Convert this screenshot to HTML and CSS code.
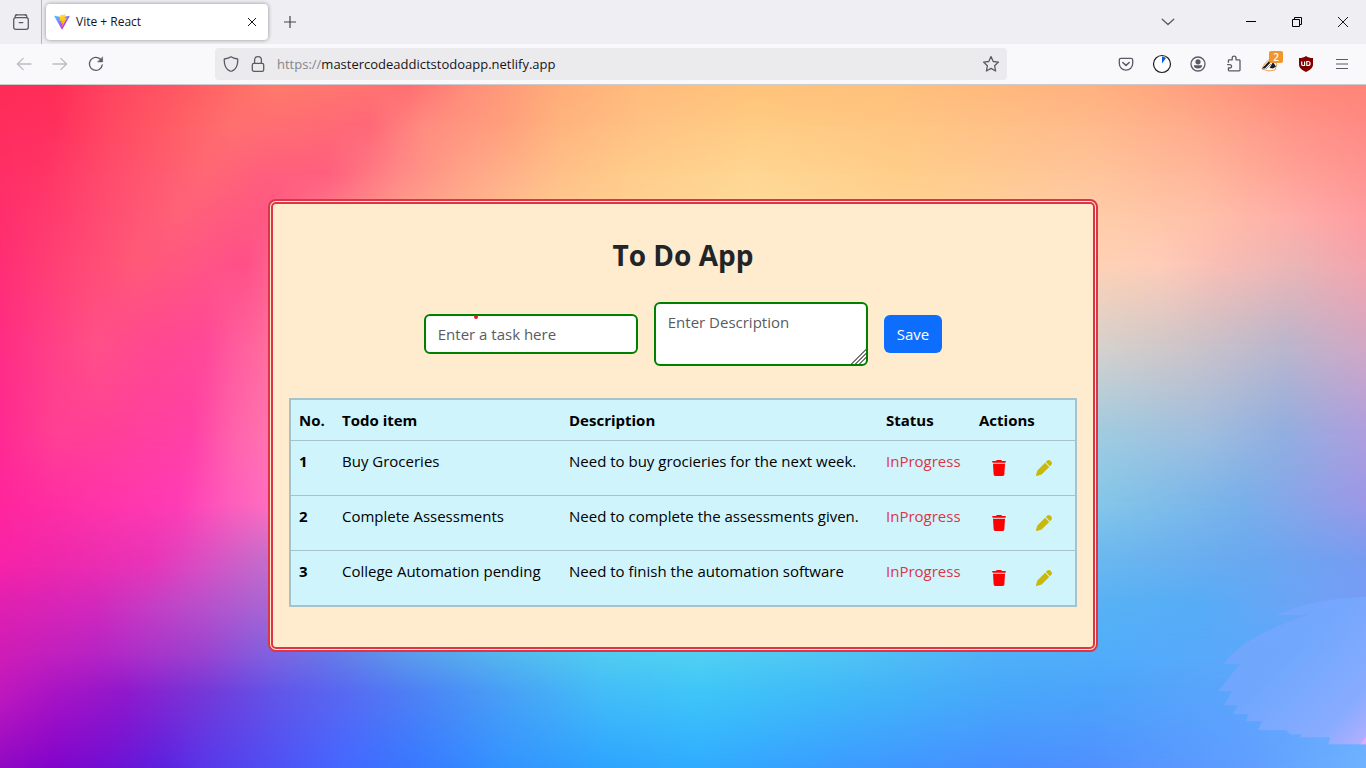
FILE: index.html
```html
<!DOCTYPE html>
<html lang="en">
<head>
<meta charset="utf-8">
<meta name="viewport" content="width=device-width, initial-scale=1">
<title>Vite + React</title>
<link rel="stylesheet" href="styles.css">
</head>
<body>
<svg class="sprite" aria-hidden="true">
  <symbol id="trash" viewBox="0 0 448 512"><path d="M135.200 17.700L128 32H32C14.300 32 0 40 0 56S14.300 84 32 84H416c17.700 0 32-12 32-28s-14.300-24-32-24H320l-7.200-14.300C307.400 6.800 296.300 0 284.200 0H163.800c-12.100 0-23.200 6.800-28.600 17.700zM416 120H32L53.200 467c1.600 25.300 22.600 45 47.900 45H346.900c25.300 0 46.300-19.700 47.900-45L416 120z"/></symbol>
  <symbol id="pen" viewBox="0 0 512 512"><path d="M362.700 19.300L314.300 67.700 444.300 197.700l48.400-48.400c25-25 25-65.500 0-90.500L453.300 19.300c-25-25-65.500-25-90.500 0zm-71 71L58.600 323.500c-10.400 10.400-18 23.300-22.200 37.400L1 481.200C-1.500 489.700 .8 498.800 7 505s15.300 8.500 23.700 6.100l120.300-35.400c14.100-4.200 27-11.800 37.400-22.200L421.700 220.300 291.700 90.300z"/></symbol>
</svg>

<header class="browser">
  <div class="tabstrip">
    <button class="recent" aria-label="Recent browsing">
      <svg width="16" height="16" viewBox="0 0 16 16" class="line"><path d="M3 .8h10"/><rect x=".7" y="3.700" width="14.600" height="11.600" rx="2"/><path d="M2.200 3.700V2.800Q2.200 .8 4 .8M13.800 3.700V2.800Q13.800 .8 12 .8M6.200 8.600h3.600"/></svg>
    </button>
    <div class="tab">
      <svg width="16" height="16" viewBox="0 0 410 404" aria-hidden="true">
        <defs>
          <linearGradient id="va" x1="6" y1="33" x2="235" y2="344" gradientUnits="userSpaceOnUse"><stop stop-color="#41d1ff"/><stop offset="1" stop-color="#bd34fe"/></linearGradient>
          <linearGradient id="vb" x1="195" y1="9" x2="237" y2="293" gradientUnits="userSpaceOnUse"><stop stop-color="#ffea83"/><stop offset=".08" stop-color="#ffdd35"/><stop offset="1" stop-color="#ffa800"/></linearGradient>
        </defs>
        <path fill="url(#va)" d="M399.600 59.500L215.600 388.500c-3.800 6.800-13.600 6.900-17.500 .1L10.600 59.600c-4.200-7.400 2.100-16.300 10.500-14.800l184.100 32.900c1.200 .2 2.400 .2 3.500 0l180.300-32.900c8.300-1.500 14.700 7.400 10.600 14.700z"/>
        <path fill="url(#vb)" d="M293 1.600L156.900 28.200c-2.200 .4-3.900 2.300-4 4.600l-8.400 141.400c-.2 3.300 2.900 5.900 6.100 5.200l37.900-8.700c3.500-.8 6.700 2.300 6 5.900l-11.300 55.100c-.8 3.700 2.700 6.900 6.300 5.800l23.400-7.100c3.600-1.100 7.100 2.100 6.300 5.800l-17.900 86.600c-1.100 5.400 6.100 8.400 9.100 3.700l2-3.100 110.900-221.300c1.900-3.700-1.300-7.900-5.400-7.100l-39 7.500c-3.700 .7-6.800-2.700-5.800-6.300L298.600 7.900c1-3.600-2.100-7-5.600-6.300z"/>
      </svg>
      <span class="tab-title">Vite + React</span>
      <button class="tab-close" aria-label="Close tab"><svg width="10" height="10" viewBox="0 0 10 10"><path d="M1 1l8 8M9 1L1 9" stroke="#15141a"/></svg></button>
    </div>
    <button class="new-tab" aria-label="New tab"><svg width="14" height="14" viewBox="0 0 14 14"><path d="M1 7h12M7 1v12" stroke="#45444d" stroke-width="1.200"/></svg></button>
    <button class="all-tabs" aria-label="List all tabs"><svg width="14" height="8" viewBox="0 0 14 8" class="line"><path d="M1.200 1.200L7 6.600l5.800-5.400"/></svg></button>
    <button class="win" aria-label="Minimize"><svg width="10" height="10" viewBox="0 0 10 10"><path d="M0 4.500h10" stroke="#000"/></svg></button>
    <button class="win" aria-label="Restore"><svg width="10" height="10" viewBox="0 0 10 10" fill="none" stroke="#000"><path d="M.5 2.500h7v7h-7zM2.500 2.500v-2h7v7h-2"/></svg></button>
    <button class="win" aria-label="Close"><svg width="10" height="10" viewBox="0 0 10 10"><path d="M0 0l10 10M10 0L0 10" stroke="#000" stroke-width=".9"/></svg></button>
  </div>

  <div class="toolbar">
    <button class="tool" aria-label="Back" disabled><svg width="16" height="14" viewBox="0 0 16 14" class="line faded"><path d="M7.200 1.400L1.400 7l5.800 5.600M1.600 7H15"/></svg></button>
    <button class="tool" aria-label="Forward" disabled><svg width="16" height="14" viewBox="0 0 16 14" class="line faded"><path d="M8.800 1.400L14.600 7l-5.800 5.600M14.400 7H1"/></svg></button>
    <button class="tool" aria-label="Reload"><svg width="16" height="16" viewBox="0 0 16 16" class="line"><path d="M14.300 8.800A6.500 6.500 0 1 1 12.500 3.300"/><path d="M14.600 1.200v4.700H9.900z" fill="#5b5b66" stroke-width=".6"/></svg></button>

    <div class="urlbar">
      <svg width="16" height="16" viewBox="0 0 16 16" class="line"><path d="M8 .8C6.300 2.200 3.800 2.800 1.300 3c-.3 5 1.400 9.800 5.400 11.900q1.300 .6 2.600 0C13.300 12.800 15 8 14.700 3 12.200 2.800 9.700 2.200 8 .8z"/></svg>
      <svg width="14" height="16" viewBox="0 0 14 16" class="line"><rect x="1.300" y="7.300" width="11.400" height="8" rx="1.600"/><path d="M3.600 7.300V4.100a3.400 3.400 0 0 1 6.800 0v3.200"/></svg>
      <div class="url" role="textbox" aria-label="Address" contenteditable="true" spellcheck="false"><span class="scheme">https://</span>mastercodeaddictstodoapp.netlify.app</div>
      <button class="star" aria-label="Bookmark this page"><svg width="18" height="18" viewBox="0 0 18 18" class="line"><path d="M9 1.600l2.200 4.900 5.300 .6-3.900 3.600 1 5.300L9 13.400 4.400 16l1-5.300L1.500 7.100l5.300-.6z"/></svg></button>
    </div>

    <button class="tool" aria-label="Save to Pocket"><svg width="16" height="16" viewBox="0 0 16 16" class="line"><path d="M3 2.300h10q1.700 0 1.700 1.700v3.500a6.700 6.700 0 0 1-13.400 0V4Q1.300 2.300 3 2.300z"/><path d="M4.800 6.500L8 9.400l3.200-2.900" stroke-width="1.500"/></svg></button>
    <button class="tool" aria-label="Timer"><svg width="20" height="20" viewBox="0 0 20 20"><circle cx="10" cy="10" r="8.500" fill="#fff" stroke="#1c1b22" stroke-width="1.200"/><path d="M10 9.500V2.500a7 7 0 0 1 4 1.500z" fill="#0061e0"/></svg></button>
    <button class="tool" aria-label="Account"><svg width="16" height="16" viewBox="0 0 16 16" class="line"><circle cx="8" cy="8" r="7"/><circle cx="8" cy="5.800" r="2.600" fill="#5b5b66" stroke="none"/><path d="M3.800 9.300h8.400q-.3 3.200-4.200 3.300-3.900-.1-4.200-3.300z" fill="#5b5b66" stroke="none"/></svg></button>
    <button class="tool" aria-label="Extensions"><svg width="16" height="18" viewBox="0 0 16 18" class="line"><path d="M2.400 7.300V5.600q0-.8.800-.8h3V3a1.900 1.900 0 0 1 3.800 0v1.800h3.200q.8 0 .8.800V15q0 .8-.8.800H3.200q-.8 0-.8-.8v-2h1.500a1.700 1.700 0 0 0 0-3.400H1.600"/></svg></button>
    <button class="tool" aria-label="Privacy Badger">
      <svg width="18" height="16" viewBox="0 0 18 16"><path d="M1 13Q4 5 10 3l6 5-2 6-6 1z" fill="#fff" stroke="#f0a050"/><path d="M1 12.500L9 4l.6 2.500L4 12.500zM8.500 12l3.500-6 3 4.500-3 2z" fill="#1c1b22"/><path d="M5 13l5-5" stroke="#999"/></svg>
      <span class="badge">2</span>
    </button>
    <button class="tool" aria-label="uBlock Origin"><svg width="16" height="16" viewBox="0 0 16 16"><path d="M8 0c2 1.400 4 2 7 2v6.500c0 3.500-3 5.500-7 7.500-4-2-7-4-7-7.500V2c3 0 5-.6 7-2z" fill="#800000"/><path d="M3.700 5.500v2.700q0 1.300 1.300 1.300h1.600v-4M8.800 5.500v4h1.300a2 2 0 0 0 0-4z" fill="none" stroke="#fff" stroke-width="1.200"/></svg></button>
    <button class="tool" aria-label="Open menu"><svg width="12" height="12" viewBox="0 0 12 12"><path d="M0 1.500h12M0 6h12M0 10.500h12" stroke="#5b5b66" stroke-width="1.200"/></svg></button>
  </div>
</header>

<main class="page">
  <div class="backdrop" aria-hidden="true">
    <i class="band b13"></i><i class="band b12"></i><i class="band b11"></i><i class="band b10"></i><i class="band b9"></i><i class="band b8"></i><i class="band b7"></i><i class="band b6"></i><i class="band b5"></i><i class="band b4"></i><i class="band b3"></i><i class="band b2"></i><i class="band b1"></i>
    <svg class="petal" viewBox="0 0 150 150" preserveAspectRatio="none">
      <defs><linearGradient id="pg" x1="0" y1="0" x2="1" y2="1"><stop offset="0" stop-color="#74a4fc"/><stop offset=".45" stop-color="#74a8fe"/><stop offset=".82" stop-color="#8eacff"/><stop offset="1" stop-color="#c4aeff"/></linearGradient></defs>
      <path fill="url(#pg)" opacity=".85" d="M150 0Q100 1 60 18H92Q25 40 8 67H24L2 94H16L8 108H22L17 117H32L30 124H46L42 133H70L74 137H86L84 140H114L112 147H150z"/>
      <path fill="#f0a8fa" opacity=".8" d="M150 139v8h-6z"/>
    </svg>
  </div>

  <section class="card">
    <h1 class="title">To Do App</h1>
    <form class="entry">
      <div class="task-field">
        <input class="control" type="text" aria-label="Task" placeholder="Enter a task here">
        <span class="marker"></span>
      </div>
      <textarea class="control" rows="2" aria-label="Description" placeholder="Enter Description"></textarea>
      <button class="save" type="button">Save</button>
    </form>
    <table class="todos">
      <colgroup><col class="c-no"><col class="c-item"><col class="c-desc"><col class="c-status"><col></colgroup>
      <thead><tr><th scope="col">No.</th><th scope="col">Todo item</th><th scope="col">Description</th><th scope="col">Status</th><th scope="col">Actions</th></tr></thead>
      <tbody>
        <tr><th scope="row">1</th><td>Buy Groceries</td><td>Need to buy grocieries for the next week.</td><td class="status">InProgress</td>
          <td><div class="actions"><button class="act del" aria-label="Delete"><svg width="14" height="16"><use href="#trash"/></svg></button><button class="act edit" aria-label="Edit"><svg width="16" height="16"><use href="#pen"/></svg></button></div></td></tr>
        <tr><th scope="row">2</th><td>Complete Assessments</td><td>Need to complete the assessments given.</td><td class="status">InProgress</td>
          <td><div class="actions"><button class="act del" aria-label="Delete"><svg width="14" height="16"><use href="#trash"/></svg></button><button class="act edit" aria-label="Edit"><svg width="16" height="16"><use href="#pen"/></svg></button></div></td></tr>
        <tr><th scope="row">3</th><td>College Automation pending</td><td>Need to finish the automation software</td><td class="status">InProgress</td>
          <td><div class="actions"><button class="act del" aria-label="Delete"><svg width="14" height="16"><use href="#trash"/></svg></button><button class="act edit" aria-label="Edit"><svg width="16" height="16"><use href="#pen"/></svg></button></div></td></tr>
      </tbody>
    </table>
  </section>
</main>
</body>
</html>
```
FILE: styles.css
```css
*, *::before, *::after { box-sizing: border-box; }

body {
  margin: 0;
  min-height: 100vh;
  display: flex;
  flex-direction: column;
  font-family: "Segoe UI", "Open Sans", "Noto Sans", sans-serif;
  font-size: 15px;
  line-height: 24px;
  color: #212529;
}

button { font: inherit; margin: 0; padding: 0; border: 0; background: none; }
svg { display: block; flex: none; }
.sprite { display: none; }
.line { fill: none; stroke: #5b5b66; stroke-width: 1.3; stroke-linecap: round; stroke-linejoin: round; }
.faded { stroke: #bcbcc2; }

/* Browser frame */
.tabstrip { display: flex; align-items: center; height: 44px; background: #efeef3; }
.tabstrip button, .tool, .star { display: flex; align-items: center; justify-content: center; }
.tabstrip .recent { width: 42px; height: 44px; border-right: 1px solid #b6b6bd; }
.tab {
  display: flex;
  align-items: center;
  gap: 6px;
  width: 222px;
  height: 36px;
  margin-left: 4px;
  padding: 0 8px;
  background: #fff;
  border-radius: 4px;
  box-shadow: 0 0 4px rgba(0, 0, 0, .4);
}
.tab-title { flex: 1; font-size: 12px; color: #15141a; }
.tab-close { width: 16px; height: 24px; }
.new-tab { width: 36px; height: 36px; margin-left: 4px; }
.all-tabs { width: 36px; height: 36px; margin-left: auto; margin-right: 42px; }
.win { width: 46px; height: 44px; }

.toolbar {
  display: flex;
  align-items: center;
  height: 41px;
  padding: 0 6px;
  background: #f9f9fb;
  border-bottom: 1px solid #cccccf;
}
.tool { width: 36px; height: 36px; position: relative; }
.urlbar {
  flex: 1;
  display: flex;
  align-items: center;
  gap: 12px;
  height: 32px;
  margin: 0 101px;
  padding: 0 7px 0 8px;
  background: #ebebed;
  border-radius: 4px;
}
.url { flex: 1; font-size: 13px; color: #15141a; white-space: nowrap; outline: none; }
.scheme { color: #85848c; }
.badge {
  position: absolute;
  top: 5px;
  right: 5px;
  width: 14px;
  height: 12px;
  background: #f0962c;
  border-radius: 2px;
  color: #fff;
  font-size: 10px;
  font-weight: 600;
  line-height: 12px;
  text-align: center;
}

/* Page */
.page {
  position: relative;
  flex: 1;
  display: flex;
  align-items: center;
  justify-content: center;
  padding-bottom: 2px;
  overflow: hidden;
}
.backdrop, .band { position: absolute; inset: 0; }
.petal { position: absolute; right: 0; bottom: 3%; width: 11%; height: 22%; }

/* Each band fades into the band below it, which blends the colours both ways. */
.b1 { background: linear-gradient(90deg, #ff2c58 0%, #ff2e56 4%, #ff4460 8%, #ff5c62 14%, #ff7a6a 20%, #ff7470 26%, #ff6e72 30%, #ff8c7a 34%, #ffac78 41%, #ffbb7c 47%, #ffc27a 55%, #ffc07a 65%, #ffb07e 80%, #ffa27e 86%, #ff8878 95%, #ff8476 100%); mask: linear-gradient(#000 0%, transparent 6%); }
.b2 { background: linear-gradient(90deg, #ff2d5e 0%, #ff305e 4%, #ff4862 8%, #ff5f66 13%, #ff7070 17%, #ff6c74 22%, #ff6878 27%, #ff8c80 31%, #ffa07c 37%, #ffb47e 41%, #ffc284 47%, #ffcc84 55%, #ffc682 66%, #ffba8c 80%, #ffac8c 87%, #ff9488 95%, #ff8a84 100%); mask: linear-gradient(#000 6%, transparent 13%); }
.b3 { background: linear-gradient(90deg, #ff2f66 0%, #ff3466 3%, #ff4c6c 8%, #ff6874 15%, #ff5f7c 19%, #ff5f7e 24%, #ff8886 29%, #ffa488 34%, #ffc088 41%, #ffcc8a 46%, #ffd692 55%, #ffce8a 66%, #ffc49a 80%, #ffb69a 88%, #ffa096 95%, #ff9492 100%); mask: linear-gradient(#000 13%, transparent 19%); }
.b4 { background: linear-gradient(90deg, #ff2e6c 0%, #ff3c6e 4%, #ff4e72 8%, #ff6278 13%, #ff5a80 17%, #ff5884 20%, #ff788a 24%, #ffa08c 30%, #ffc890 40%, #ffdc9c 55%, #ffd294 68%, #ffcca8 80%, #ffc0a8 88%, #ffaca8 95%, #ff9ca0 100%); mask: linear-gradient(#000 19%, transparent 26%); }
.b5 { background: linear-gradient(90deg, #ff2e74 0%, #ff4074 4%, #ff5a78 10%, #ff5585 15%, #ff5088 18%, #ff6090 20%, #ff948c 25%, #ffd49c 44%, #ffe2a8 55%, #ffd8a0 70%, #ffd2b4 80%, #ffccb8 85%, #fabeb4 89%, #ecb4b4 95%, #f4a4ac 100%); mask: linear-gradient(#000 26%, transparent 38%); }
.b6 { background: linear-gradient(90deg, #ff2d84 0%, #ff5088 7%, #ff4890 11%, #ff4898 15%, #ff5a9c 17%, #ff709e 20%, #d8d2cc 80%, #d0c6c8 86%, #bcb6cc 94%, #d2a8c4 100%); mask: linear-gradient(#000 38%, transparent 51%); }
.b7 { background: linear-gradient(90deg, #ff2a92 0%, #ff4094 4%, #ff4098 8%, #ff40a6 14%, #ff62ac 17%, #ff76b0 20%, #a0cce0 80%, #a0bede 88%, #92aee0 94%, #ae9ede 100%); mask: linear-gradient(#000 51%, transparent 61%); }
.b8 { background: linear-gradient(90deg, #ff269c 0%, #ff34a8 7%, #ff3cb4 13%, #ff5ebc 17%, #ff70c0 20%, #86c8e8 80%, #78b0ea 91%, #9c98e6 100%); mask: linear-gradient(#000 61%, transparent 70%); }
.b9 { background: linear-gradient(90deg, #f822a8 0%, #ee28ac 4%, #e834b8 11%, #d850c4 15%, #c070cc 20%, #68b8f0 80%, #68a8f0 92%, #769cf2 100%); mask: linear-gradient(#000 70%, transparent 76%); }
.b10 { background: linear-gradient(90deg, #e020b0 0%, #d428bc 7%, #bf48c8 13%, #a868d4 20%, #58b2f4 80%, #56acf6 88%, #6ca4f6 95%, #789cf8 100%); mask: linear-gradient(#000 76%, transparent 83%); }
.b11 { background: linear-gradient(90deg, #d01cb6 0%, #b824c4 7%, #9c44d0 15%, #8064e0 20%, #6878e6 24%, #5c9cec 30%, #54b8ee 37%, #50ccf0 44%, #52d0f2 51%, #50c4f4 62%, #50b0f8 73%, #50aefa 80%, #58aafa 88%, #64a6fc 100%); mask: linear-gradient(#000 83%, transparent 89%); }
.b12 { background: linear-gradient(90deg, #c018be 0%, #a814c4 4%, #9018cc 9%, #7438d8 15%, #6254e8 20%, #5868f2 25%, #4c84f6 31%, #48a0f6 37%, #44bcf8 44%, #3ec6f8 51%, #40b8f8 62%, #48a8fa 73%, #4ca4fa 80%, #58a4fc 88%, #68a8fc 100%); mask: linear-gradient(#000 89%, transparent 100%); }
.b13 { background: linear-gradient(90deg, #900ac4 0%, #8204cc 4%, #7010d4 8%, #5c22e0 12%, #5838ea 15%, #5050f4 20%, #4468ff 25%, #3878ff 30%, #3494ff 37%, #2ea4fe 44%, #30acff 51%, #3c9cff 62%, #4890ff 73%, #5090ff 80%, #62a0ff 92%, #6eb4ff 100%); }

.card {
  position: relative;
  display: flex;
  flex-direction: column;
  width: 100%;
  max-width: 830px;
  padding: 33px 16px 40px;
  background: #ffebcd;
  border: 5px double #dc3545;
  border-radius: 8px;
}
.title { margin: 0 0 29px; font-size: 28px; line-height: 36px; font-weight: 700; text-align: center; }
.entry { display: flex; align-items: center; justify-content: center; gap: 16px; margin-bottom: 32px; }
.task-field { position: relative; }
.control {
  display: block;
  width: 214px;
  margin: 0;
  padding: 6px 12px;
  font: inherit;
  color: #212529;
  background: #fff;
  border: 2px solid #008000;
  border-radius: 6px;
}
input.control { height: 40px; }
textarea.control { height: 64px; resize: both; }
textarea.control::-webkit-resizer {
  background: linear-gradient(135deg, transparent 48%, #777 48%, #777 54%, transparent 54%, transparent 62%, #777 62%, #777 68%, transparent 68%, transparent 76%, #777 76%, #777 82%, transparent 82%);
}
.control::placeholder { color: #595c5f; opacity: 1; }
.marker { position: absolute; top: 1px; left: 50px; width: 4px; height: 4px; border-radius: 50%; background: #e01b24; }
.save { height: 38px; padding: 0 13px; border-radius: 6px; background: #0d6efd; color: #fff; }

.todos {
  width: 100%;
  table-layout: fixed;
  border-collapse: collapse;
  border: 2px solid #a6c3ca;
  background: #cff4fc;
  color: #000;
}
.c-no { width: 44px; }
.c-item { width: 227px; }
.c-desc { width: 317px; }
.c-status { width: 93px; }
.todos th, .todos td { padding: 8px; text-align: left; vertical-align: top; white-space: nowrap; }
.todos tr { border-bottom: 1px solid #a6c3ca; }
.todos tbody tr:last-child { border-bottom: 0; }
.todos .status { color: #dc3545; }
.actions { display: flex; gap: 5px; }
.act { display: flex; align-items: center; justify-content: center; width: 40px; height: 38px; }
.del { fill: #f00; }
.edit { fill: #c8b80c; }
```
